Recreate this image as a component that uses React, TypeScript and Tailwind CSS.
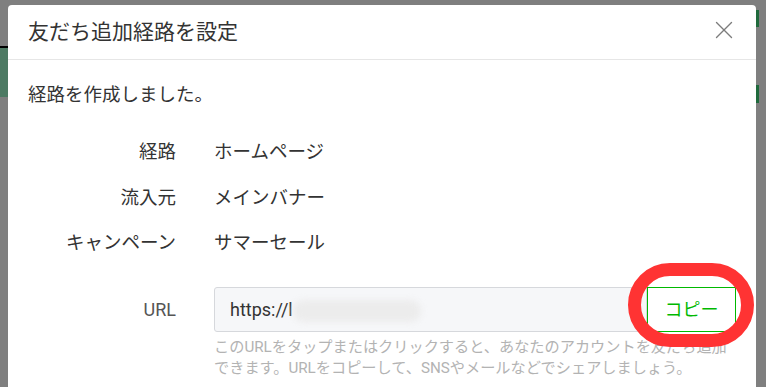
import { X } from "lucide-react";

const ROWS = [
  { label: "経路", value: "ホームページ" },
  { label: "流入元", value: "メインバナー" },
  { label: "キャンペーン", value: "サマーセール" },
];

export default function App() {
  return (
    <div
      className="relative w-[766px] h-[387px] overflow-hidden bg-[#7f7f7f] pl-[8px] pt-[5px]"
      style={{ fontFamily: '"Roboto", "Noto Sans CJK JP", sans-serif' }}
    >
      {/* dimmed page behind the modal */}
      <div className="absolute left-0 top-[46px] w-[8px] h-[51px] border-t-2 border-black bg-[#4d7a63]" />
      <div className="absolute right-[7px] top-[10px] w-[3px] h-[17px] bg-[#1f6a3c]" />
      <div className="absolute right-[7px] top-[85px] w-[3px] h-[18px] bg-[#1f6a3c]" />

      <div className="w-[748px] h-[400px] bg-white rounded-t-[4px] text-[#333]">
        <div className="flex h-[55px] items-center justify-between border-b border-[#e6e6e6] pl-[20px] pr-[17px]">
          <h1 className="text-[21px] leading-none font-normal">友だち追加経路を設定</h1>
          <X className="w-[30px] h-[30px] -mt-[4px] text-[#7c7c7c]" strokeWidth={1.1} />
        </div>

        <div className="px-[20px]">
          <p className="pt-[22px] text-[18.5px] leading-[26px]">経路を作成しました。</p>

          <div className="mt-[31px] flex flex-col gap-[19.5px]">
            {ROWS.map((row) => (
              <div key={row.label} className="flex items-center text-[18.5px] leading-[26px]">
                <span className="w-[148px] text-right">{row.label}</span>
                <span className="ml-[38px]">{row.value}</span>
              </div>
            ))}
          </div>

          <div className="mt-[31px] flex">
            <span className="w-[148px] h-[45px] flex items-center justify-end text-[18px] text-[#555]">URL</span>
            <div className="ml-[38px] w-[522px]">
              <div className="flex h-[45px]">
                <div className="relative flex-1 flex items-center rounded-l-[3px] border border-[#d6d8dc] bg-[#f6f7f9] pl-[15px] text-[18px] text-[#333]">
                  https://l
                  <span className="absolute left-[78px] top-[12px] w-[128px] h-[22px] rounded-full bg-[#ececec] blur-[3px]" />
                </div>
                <button className="w-[89px] border border-[#00b900] bg-white text-[18px] text-[#00b900]">
                  コピー
                </button>
              </div>
              <p className="mt-[5px] text-[15.2px] leading-[21px] text-[#b3b3b3] whitespace-nowrap">
                このURLをタップまたはクリックすると、あなたのアカウントを友だち追加
                <br />
                できます。URLをコピーして、SNSやメールなどでシェアしましょう。
              </p>
            </div>
          </div>
        </div>
      </div>

      {/* annotation ring */}
      <div className="absolute left-[628px] top-[263px] w-[126px] h-[84px] rounded-[42px] border-[13px] border-[#ff3333]" />
    </div>
  );
}
